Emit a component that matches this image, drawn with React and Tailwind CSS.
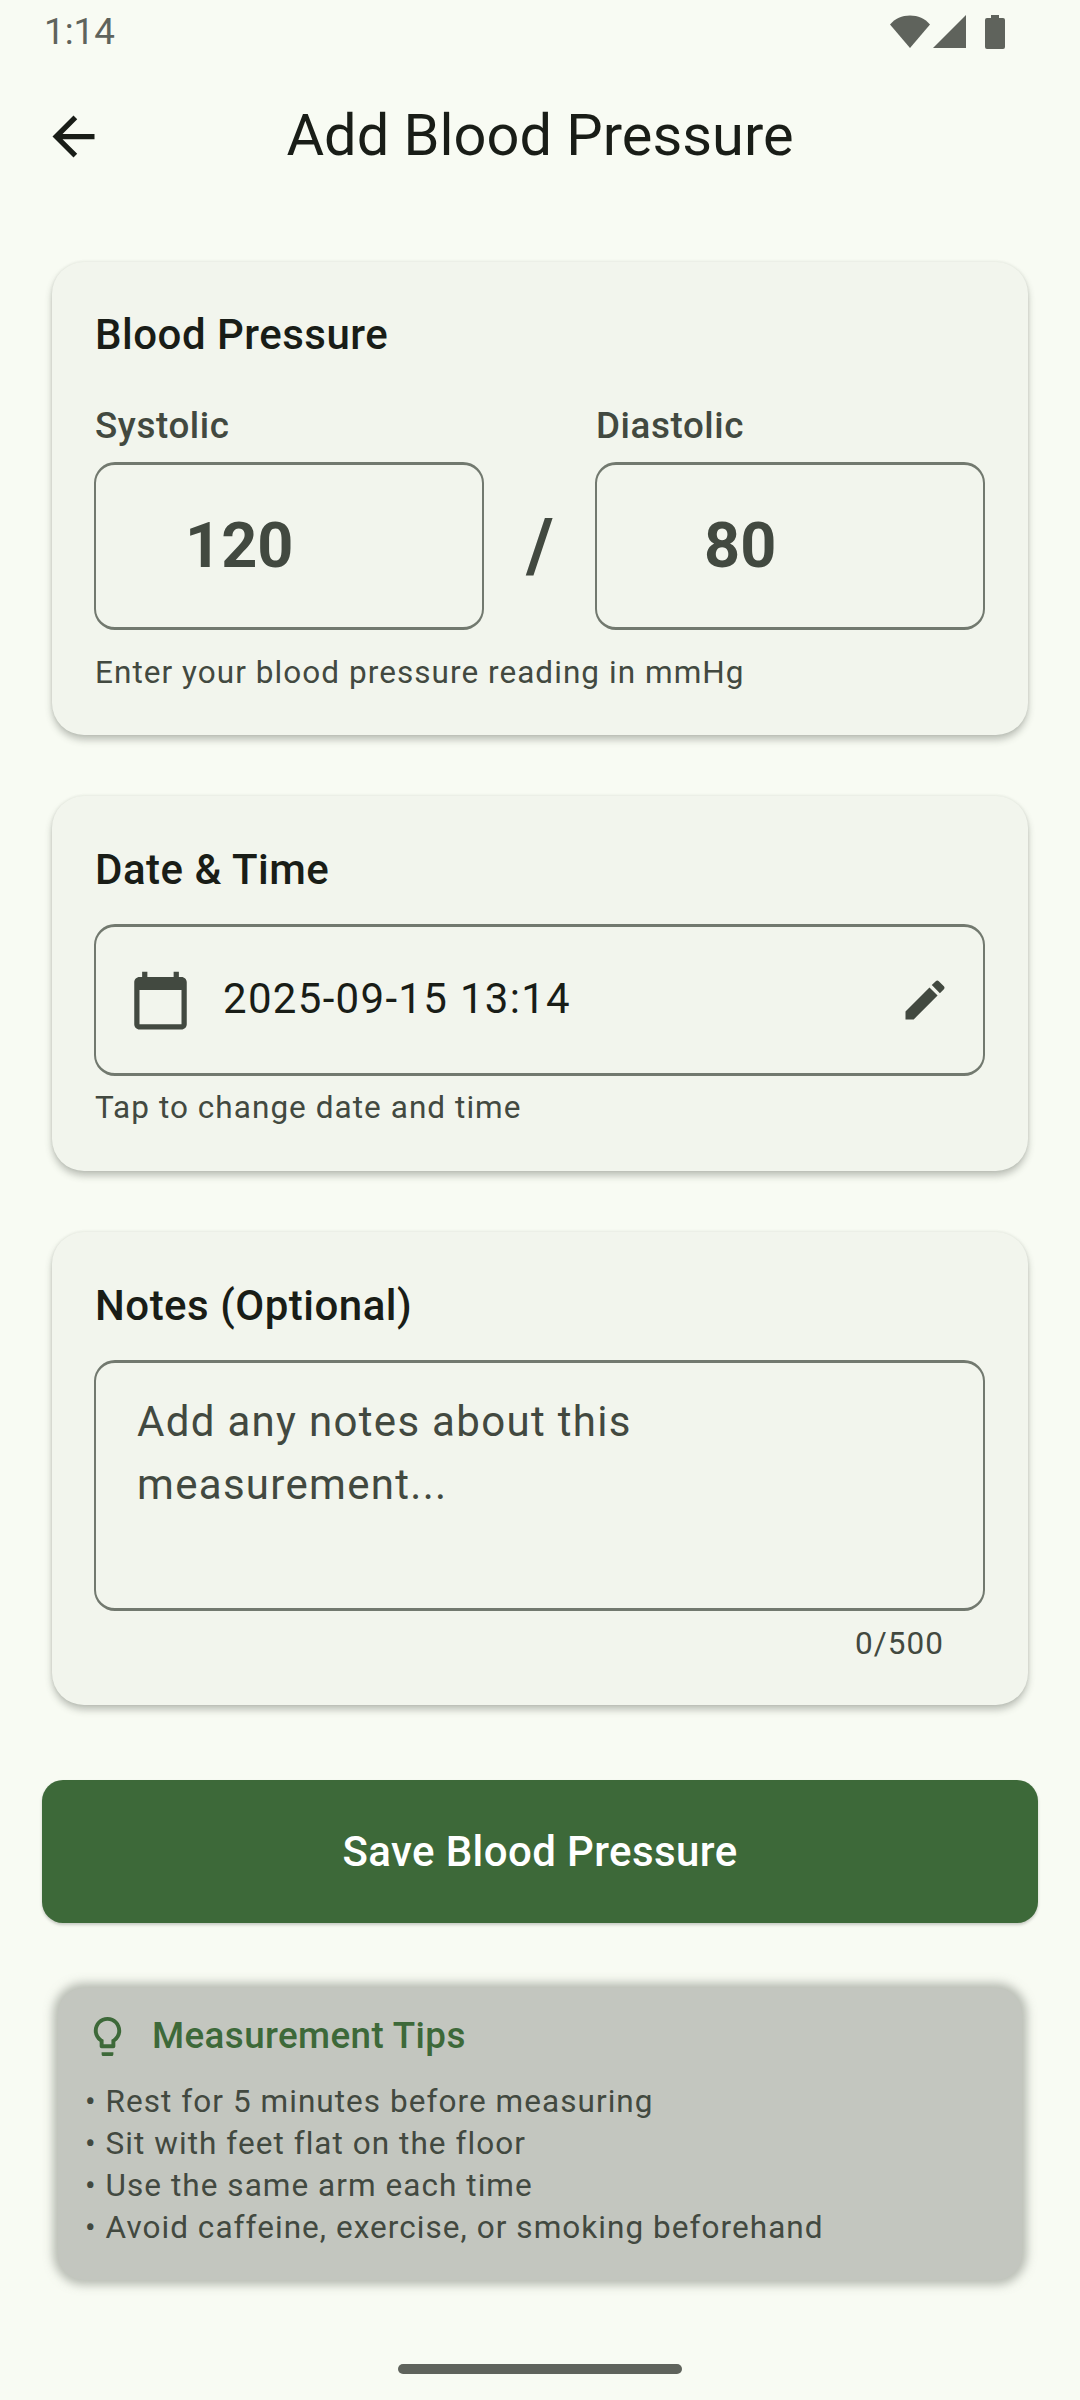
import React from "react";

const Card = ({ className = "", children }) => (
  <div className={`mx-[52px] rounded-[32px] bg-[#f2f5ed] pr-[43px] pl-[42px] shadow-[0_5px_7px_rgba(60,65,55,0.3),0_0_3px_rgba(60,65,55,0.12)] ${className}`}>
    {children}
  </div>
);

const CardTitle = ({ children }) => (
  <div className="h-[56px] pl-[1px] text-[42px] leading-[56px] font-medium tracking-[0.5px] text-[#191d17]">
    {children}
  </div>
);

const Hint = ({ className = "", children }) => (
  <div className={`pl-[1px] text-[31.5px] leading-[42px] tracking-[1.05px] text-[#424940] ${className}`}>
    {children}
  </div>
);

const BpField = ({ label, value, valueClass }) => (
  <div className="w-[390px] shrink-0">
    <div className="h-[48px] pl-[1px] text-[36.75px] leading-[48px] font-medium tracking-[0.6px] text-[#424940]">
      {label}
    </div>
    <div className="mt-[12px] flex h-[168px] items-center rounded-[21px] border-x-[2px] border-y-[3px] border-[#72796f]">
      <span className={`text-[63px] leading-[84px] font-bold text-[#424940] ${valueClass}`}>{value}</span>
    </div>
  </div>
);

const tips = [
  "Rest for 5 minutes before measuring",
  "Sit with feet flat on the floor",
  "Use the same arm each time",
  "Avoid caffeine, exercise, or smoking beforehand",
];

export default function App() {
  return (
    <div className="h-[2400px] w-[1080px] overflow-hidden bg-[#f8fbf3] font-['Roboto',sans-serif]">
      {/* Status bar */}
      <div className="flex h-[63px] items-center justify-between pr-[75px] pl-[44px]">
        <span className="text-[36.75px] leading-[63px] text-[#5f635c]">1:14</span>
        <div className="flex items-center">
          <svg width="40" height="33" viewBox="0 0 40 33" className="mr-[3px]">
            <path d="M0 9.5C5 3.5 12 0.5 20 0.5s15 3 20 9L20 33z" fill="#5f635c" />
          </svg>
          <svg width="33" height="33" viewBox="0 0 33 33" className="mr-[19px]">
            <path d="M33 0v33H0z" fill="#5f635c" />
          </svg>
          <svg width="20" height="34" viewBox="0 0 20 34">
            <path d="M6 0h8v3h4a2 2 0 0 1 2 2v27a2 2 0 0 1-2 2H2a2 2 0 0 1-2-2V5a2 2 0 0 1 2-2h4z" fill="#5f635c" />
          </svg>
        </div>
      </div>

      {/* App bar */}
      <div className="relative flex h-[147px] items-center justify-center">
        <svg width="63" height="63" viewBox="0 0 24 24" className="absolute top-[42px] left-[42px]" fill="#191d17">
          <path d="M20 11H7.83l5.59-5.59L12 4l-8 8 8 8 1.41-1.41L7.83 13H20v-2z" />
        </svg>
        <span className="mt-[-4px] text-[57.75px] leading-[74px] text-[#191d17]">Add Blood Pressure</span>
      </div>

      {/* Blood pressure */}
      <Card className="mt-[52px] h-[473px] pt-[45px]">
        <CardTitle>Blood Pressure</CardTitle>
        <div className="mt-[39px] flex items-end justify-between">
          <BpField label="Systolic" value="120" valueClass="ml-[89px]" />
          <div className="flex h-[168px] w-[111px] items-center justify-center pl-[1px] text-[73.5px] leading-[84px] font-bold text-[#424940]">/</div>
          <BpField label="Diastolic" value="80" valueClass="ml-[107px]" />
        </div>
        <Hint className="mt-[22px]">Enter your blood pressure reading in mmHg</Hint>
      </Card>

      {/* Date and time */}
      <Card className="mt-[61px] h-[375px] pt-[46px]">
        <CardTitle>Date &amp; Time</CardTitle>
        <div className="mt-[26px] flex h-[152px] items-center rounded-[21px] border-x-[2px] border-y-[3px] border-[#72796f] pr-[32px] pl-[33px]">
          <svg width="63" height="63" viewBox="0 0 24 24" fill="#424940" className="shrink-0">
            <path d="M20 3h-1V1h-2v2H7V1H5v2H4c-1.1 0-2 .9-2 2v16c0 1.1.9 2 2 2h16c1.1 0 2-.9 2-2V5c0-1.1-.9-2-2-2zm0 18H4V8h16v13z" />
          </svg>
          <span className="mb-[2px] ml-[31px] grow text-[42px] leading-[56px] tracking-[1.31px] text-[#191d17]">2025-09-15 13:14</span>
          <svg width="52" height="52" viewBox="0 0 24 24" fill="#424940" className="shrink-0">
            <path d="M3 17.25V21h3.75L17.81 9.94l-3.75-3.75L3 17.25zM20.71 7.04c.39-.39.39-1.02 0-1.41l-2.34-2.34c-.39-.39-1.02-.39-1.41 0l-1.83 1.83 3.75 3.75 1.83-1.83z" />
          </svg>
        </div>
        <Hint className="mt-[11px]">Tap to change date and time</Hint>
      </Card>

      {/* Notes */}
      <Card className="mt-[61px] h-[473px] pt-[46px]">
        <CardTitle>Notes (Optional)</CardTitle>
        <div className="mt-[26px] h-[251px] rounded-[21px] border-x-[2px] border-y-[3px] border-[#72796f] px-[41px] pt-[27px] text-[42px] leading-[63px] tracking-[1.31px] text-[#424940]">
          Add any notes about this measurement...
        </div>
        <Hint className="mt-[12px] pr-[41px] text-right">0/500</Hint>
      </Card>

      {/* Save */}
      <div className="mx-[42px] mt-[75px] flex h-[143px] items-center justify-center rounded-[21px] bg-[#3d6939] text-[42px] font-medium tracking-[0.4px] text-white shadow-[0_2px_3px_rgba(60,65,55,0.25)]">
        Save Blood Pressure
      </div>

      {/* Tips */}
      <div className="mx-[58px] mt-[65px] h-[292px] rounded-[26px] bg-[#c3c6bf] px-[27px] pt-[24px] shadow-[0_0_10px_5px_rgba(120,125,115,0.5)]">
        <div className="flex items-center">
          <svg width="47" height="47" viewBox="0 0 24 24" fill="#3d6939" className="ml-[-1px] shrink-0">
            <path d="M9 21c0 .55.45 1 1 1h4c.55 0 1-.45 1-1v-1H9v1zm3-19C8.14 2 5 5.14 5 9c0 2.38 1.19 4.47 3 5.74V17c0 .55.45 1 1 1h6c.55 0 1-.45 1-1v-2.26c1.81-1.27 3-3.36 3-5.74 0-3.86-3.14-7-7-7zm2.85 11.1l-.85.6V16h-4v-2.3l-.85-.6C7.8 12.16 7 10.63 7 9c0-2.76 2.24-5 5-5s5 2.24 5 5c0 1.63-.8 3.16-2.15 4.1z" />
          </svg>
          <span className="ml-[21px] text-[36.75px] leading-[48px] font-medium tracking-[0.4px] text-[#3d6939]">Measurement Tips</span>
        </div>
        <div className="mt-[21px]">
          {tips.map((tip) => (
            <div key={tip} className="text-[31.5px] leading-[42px] tracking-[1.05px] text-[#424940]">• {tip}</div>
          ))}
        </div>
      </div>

      {/* Home indicator */}
      <div className="mx-auto mt-[84px] h-[10px] w-[284px] rounded-full bg-[#5f635c]" />
    </div>
  );
}
